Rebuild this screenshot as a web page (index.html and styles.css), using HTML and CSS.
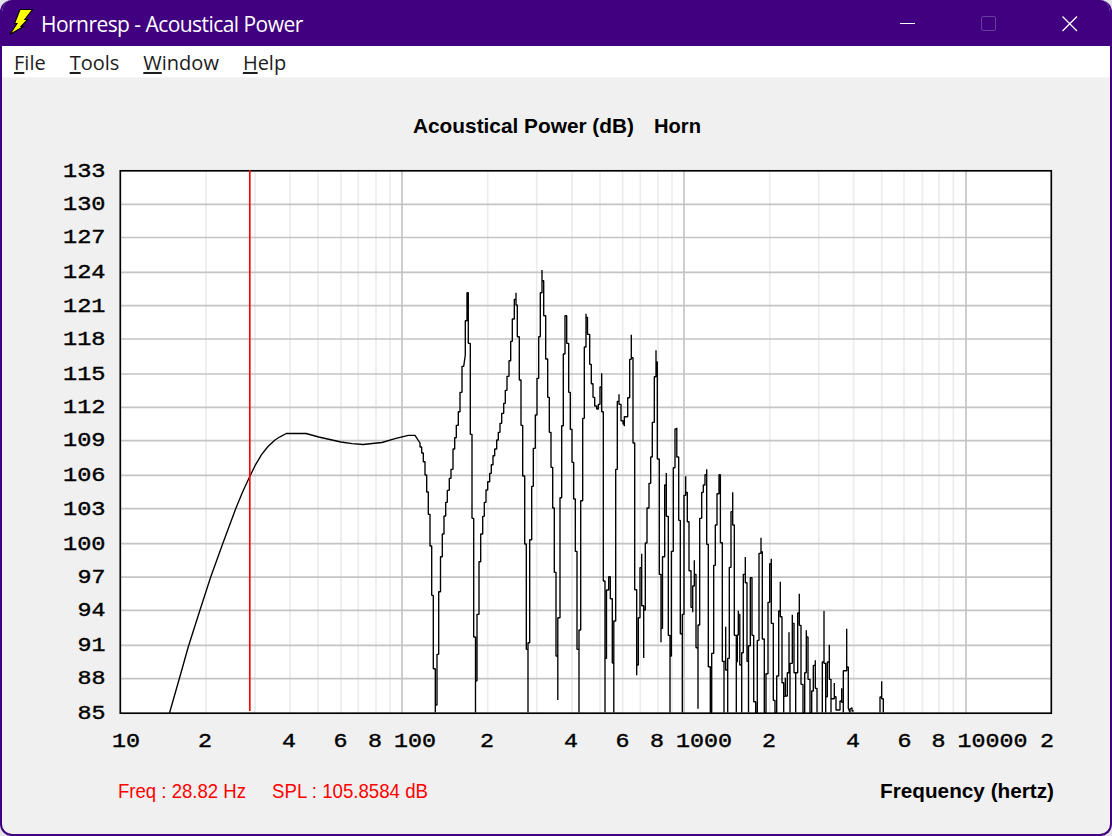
FILE: index.html
```html
<!DOCTYPE html>
<html lang="en">
<head>
  <meta charset="UTF-8" />
  <meta name="viewport" content="width=device-width, initial-scale=1.0"/>
  <title>Hornresp - Acoustical Power</title>
  <link rel="stylesheet" href="styles.css">
</head>
<body>
  <div class="window">
    <header class="titlebar">
      <svg class="app-icon" width="26" height="30" viewBox="0 0 26 30">
        <path d="M12 2.5H24.5L16.8 12.5H19.8L13 19.5H15.5L1.8 27.5L9 16.5H6.5Z" fill="#ffff00" stroke="#000" stroke-width="1.1"/>
      </svg>
      <h1>Hornresp - Acoustical Power</h1>
      <div class="controls">
        <svg width="16" height="16" viewBox="0 0 16 16"><path d="M0 7.5H15" stroke="#fff"/></svg>
        <svg width="16" height="16" viewBox="0 0 16 16"><rect x="0.5" y="0.5" width="14" height="14" rx="1.5" fill="none" stroke="#6c3b9d"/></svg>
        <svg width="16" height="16" viewBox="0 0 16 16"><path d="M0.5 0.5L15 15M15 0.5L0.5 15" stroke="#fff" stroke-width="1.3"/></svg>
      </div>
    </header>

    <nav class="menu">
      <span><u>F</u>ile</span>
      <span><u>T</u>ools</span>
      <span><u>W</u>indow</span>
      <span><u>H</u>elp</span>
    </nav>

    <main>
      <svg class="chart" width="1108" height="756" viewBox="2 78 1108 756">
        <g class="heading">
          <text x="413" y="133" textLength="221" lengthAdjust="spacingAndGlyphs">Acoustical Power (dB)</text>
          <text x="654" y="133" textLength="47" lengthAdjust="spacingAndGlyphs">Horn</text>
        </g>

        <rect x="120.5" y="171" width="931" height="542" fill="#fff"/>

        <!-- minor frequency lines -->
        <path class="minor" d="M206 171V713M255 171V713M290 171V713M318 171V713M341 171V713M358.3 171V713M376 171V713M390 171V713
          M487.7 171V713M536.7 171V713M572 171V713M600 171V713M622.7 171V713M640.3 171V713M658 171V713M672 171V713
          M769.7 171V713M818.7 171V713M853.7 171V713M881.7 171V713M904 171V713M922.3 171V713M939 171V713M953.3 171V713"/>
        <!-- decades and dB lines -->
        <path class="major" d="M402 171V713M684 171V713M966 171V713
          M120.5 204.3H1051M120.5 237.5H1051M120.5 272.3H1051M120.5 305.7H1051M120.5 339H1051M120.5 374H1051M120.5 407.3H1051M120.5 440.7H1051
          M120.5 475.3H1051M120.5 508.7H1051M120.5 543.7H1051M120.5 577.2H1051M120.5 610.4H1051M120.5 645.3H1051M120.5 678.7H1051"/>

        <!-- response -->
        <path class="curve" d="M169.5 713L179.3 678.7L188.3 646.7L200 610L210.7 577L222.7 543.7L235.7 508.7L243 491L250 476L255 465.7L261.7 454.3L268 446.5L275 440L280 436.8L286.3 433.5H306L318.7 437L341 442L352 443.7L363 444.5L382 442.5L395 438.7L408.3 435.3H415L420 443
          V447H421.7V453H423.3V461.7H425V475H426.7V492H428.3V514.3H430V546H431.7V595.3H433.3V668.7H435.3V712.5V705H437V654.3H438.7V591.7H440.5V556.7H442.3V534H444V516H445.7V502.3H447.3V490.3H449.3V478.3H451V469.3H453V449H454.7V437.7H456.3V425.3H458.3V411.7H460V392.3H462V366.3H463.7L465.3 355V320.7H467V292.7H468.3V343.3H470.3V434.3H472V518.3H473.7V637H475.5V712.5
          V680.7H477V614.3H479V561.7H480.7V534H482.7V516.3H484.3V502.3H486V490H487.7V481.7H489.7V473.3H491.3V464.7H493V455.7H494.7V449H496.7V440H498.3V432.3H500V423.3H501.7V413.3H503.7V403.3H505.3V390.3H507V376.3H509V360.7H510.7V341.3H512.3V319H514.3V299.3H516V292.7V305H517.3V336.7H519.3V380H521V425.3H522.7V476H524.7V544H526.3V649.3H528V712.5
          V642.7H529.7V539.7H531.7V486.3H533.3V448.3H535.3V415H537V378.3H538.7V336.7H540.3V292.7H542V270V280.7H543.7V315.7H545.7V359H547.7V397.3H549.3V432.3H551V467.3H552.7V508H554.3V572.3H556V656H557.8V700
          V617.7H560V497.7H561.7V425.7H563.3V354H565V315.7H566.7V343.3H568.7V392.3H570.3V429.3H572V462.3H573.7V499H575.3V551.3H577V649.3H579V712.5
          V630H580.7V500.7H582.7V418.3H584.3V347H586V313.7V317.3H587.5V334.3H589.7V364.3H591.3V383.7H593V397.3H594.7V406H596.7V409H598.3V404.3H600V387H601.7V373.3V411.7H603.3V581H605V712.5
          V658.3H606.5V590H608.7V576.7H610.3V598.7H612.3V663H613.8V712.5V621H615.7V469.3H617.3V401.3H619V394.3V404.3H621V420.7H623V424H624.3V426.3V416.7H627.7V397.7H629.7V359.3H631.3V334.7V357.7H633V443H634.7V589.7H636.7V675.3
          V665H638.3V617.7H640V567.7H641.7V553.7V605.7H643.7V658V610H645.3V543H647V508H649V483.3H650.7V457H652.3V422.3H654.3V376.7H656V350.3V362H657.3V459H659.3V574.3H661V642.3V628.3H662.5V556.7H664.7V485H666.3V473V516.3H668.3V635.3H670V712.5
          V656H671.4V551.3H673.3V467.7H675V429H676.8V427.7V457H678.7V520.3H680.3V633.7H682.3V712.5V614.3H684V495.3H685.7V476.3V492.3H687.3V521.7H689V570.7H691V607.3H692.7V612.3V586H694.3V560.3V574.3H696V647.7H698V708.7
          V625H699.7V518.3H701.7V492.3H703.3V485H705V474.7H706.7V469.3V544.3H708.3V666.7H710.3V712.5H711.7V653.3H713.7V565.3H715.3V525H717V493.7H719V474.7H720.4V542.7H722.3V661.3H724V712.5
          V661.3H725.7V626.7V670H727.7V712.5V658.3H729.3V567.3H731V511.7H732.7V492.3V525H734.3V635.3H736.3V712.5V661.7H737.3V635H738.3V610.7V614.3H739.8V665H741.7V712.5V652.7H743.3V574.3H745.3V557V582.7H747V661.3H748.5V712.5
          V645.7H750.3V577.7H752V635.3H753.7V701.7H755.7V712.5H757.3V640.3H759V553.3H761V537.7V551.7H762.3V639H764.3V712.5H766V673.7H768V602.3H769.7V563.7H771.3V558.7V623.3H773.3V700.3H775V712.5H776.7V676H778.7V611H780.3V581.7
          V616.7H782V682.7H783.7V712.5V696.3H785.3V677.7V696H787.3V672.7H789V632.3V673H790V712.5V663.3H792.3V614.7V623.3H794V672.7H795.7V712.5V672.7H797.7V613H799.3V593.7V625.3H801V684.3H803V712.5H804.7V672.7H806.3V630.3V637H808V679.3H810V712.5
          H811.7V691H813.3V665.3H815.3V660.3V688.3H817V712.5M822.3 712.5V662H824V611V663.3H825.7V712.5V696.7H827.3V662H829.3V644.7V679.3H831V712.5V698.7H834.3V683V696.7H836V701V710H840V701H841.7V688.3V702.3H843.3V712.5V670.7H846.7V628.7V667H848.3V708.3L850 712.5V709L852 707.7V711H853.7
          M880 712.5V697H881.7V681.3V698.7H883.3V712.5"/>

        <rect class="frame" x="120.3" y="170.8" width="931" height="542.4"/>
        <path class="cursor" d="M249.8 170V711"/>

        <g class="scale">
          <text x="63" y="176.5" textLength="42.5" lengthAdjust="spacingAndGlyphs">133</text>
          <text x="63" y="210" textLength="42.5" lengthAdjust="spacingAndGlyphs">130</text>
          <text x="63" y="243" textLength="42.5" lengthAdjust="spacingAndGlyphs">127</text>
          <text x="63" y="278" textLength="42.5" lengthAdjust="spacingAndGlyphs">124</text>
          <text x="63" y="311.5" textLength="42.5" lengthAdjust="spacingAndGlyphs">121</text>
          <text x="63" y="344.5" textLength="42.5" lengthAdjust="spacingAndGlyphs">118</text>
          <text x="63" y="379.5" textLength="42.5" lengthAdjust="spacingAndGlyphs">115</text>
          <text x="63" y="413" textLength="42.5" lengthAdjust="spacingAndGlyphs">112</text>
          <text x="63" y="446" textLength="42.5" lengthAdjust="spacingAndGlyphs">109</text>
          <text x="63" y="481" textLength="42.5" lengthAdjust="spacingAndGlyphs">106</text>
          <text x="63" y="514.5" textLength="42.5" lengthAdjust="spacingAndGlyphs">103</text>
          <text x="63" y="549.5" textLength="42.5" lengthAdjust="spacingAndGlyphs">100</text>
          <text x="77.5" y="582.5" textLength="28" lengthAdjust="spacingAndGlyphs">97</text>
          <text x="77.5" y="616" textLength="28" lengthAdjust="spacingAndGlyphs">94</text>
          <text x="77.5" y="651" textLength="28" lengthAdjust="spacingAndGlyphs">91</text>
          <text x="77.5" y="684" textLength="28" lengthAdjust="spacingAndGlyphs">88</text>
          <text x="77.5" y="719" textLength="28" lengthAdjust="spacingAndGlyphs">85</text>

          <text x="112" y="747" textLength="28" lengthAdjust="spacingAndGlyphs">10</text>
          <text x="198" y="747" textLength="14" lengthAdjust="spacingAndGlyphs">2</text>
          <text x="282" y="747" textLength="14" lengthAdjust="spacingAndGlyphs">4</text>
          <text x="333.5" y="747" textLength="14" lengthAdjust="spacingAndGlyphs">6</text>
          <text x="368" y="747" textLength="14" lengthAdjust="spacingAndGlyphs">8</text>
          <text x="394" y="747" textLength="42" lengthAdjust="spacingAndGlyphs">100</text>
          <text x="480" y="747" textLength="14" lengthAdjust="spacingAndGlyphs">2</text>
          <text x="564" y="747" textLength="14" lengthAdjust="spacingAndGlyphs">4</text>
          <text x="615.5" y="747" textLength="14" lengthAdjust="spacingAndGlyphs">6</text>
          <text x="650" y="747" textLength="14" lengthAdjust="spacingAndGlyphs">8</text>
          <text x="676" y="747" textLength="56" lengthAdjust="spacingAndGlyphs">1000</text>
          <text x="762" y="747" textLength="14" lengthAdjust="spacingAndGlyphs">2</text>
          <text x="846" y="747" textLength="14" lengthAdjust="spacingAndGlyphs">4</text>
          <text x="897.5" y="747" textLength="14" lengthAdjust="spacingAndGlyphs">6</text>
          <text x="931.5" y="747" textLength="14" lengthAdjust="spacingAndGlyphs">8</text>
          <text x="957.5" y="747" textLength="70" lengthAdjust="spacingAndGlyphs">10000</text>
          <text x="1040" y="747" textLength="14" lengthAdjust="spacingAndGlyphs">2</text>
        </g>

        <g class="readout">
          <text x="118" y="798" textLength="128" lengthAdjust="spacingAndGlyphs">Freq : 28.82 Hz</text>
          <text x="272" y="798" textLength="156" lengthAdjust="spacingAndGlyphs">SPL : 105.8584 dB</text>
        </g>
        <text class="axis-title" x="880" y="798" textLength="174" lengthAdjust="spacingAndGlyphs">Frequency (hertz)</text>
      </svg>
    </main>
  </div>
</body>
</html>
```
FILE: styles.css
```css
* {
  box-sizing: border-box;
}
body {
  margin: 0;
  background: #e4e4e8;
}
.window {
  width: 1112px;
  height: 836px;
  border: 2px solid #40007f;
  border-top: none;
  border-radius: 12px;
  background: #f0f0f0;
  overflow: hidden;
}
.titlebar {
  height: 46px;
  padding-left: 6px;
  background: #40007f;
  color: white;
  display: flex;
  align-items: center;
}
.app-icon {
  margin-bottom: 3px;
}
.titlebar h1 {
  margin: 2px 0 0 7px;
  font: 400 21px "Open Sans", "Noto Sans", sans-serif;
  letter-spacing: -0.55px;
  white-space: nowrap;
}
.controls {
  margin-left: auto;
  padding: 1px 32px 0 0;
  display: flex;
  gap: 65px;
}
.menu {
  height: 32px;
  padding: 2px 12px 0;
  background: white;
  border-bottom: 1px solid #f5f5f5;
  display: flex;
  align-items: center;
  gap: 24px;
  font: 400 20px "Open Sans", "Noto Sans", sans-serif;
  color: #1c1c1c;
}
.menu u {
  text-underline-offset: 2px;
  text-decoration-thickness: 2px;
}
.chart {
  display: block;
}
.minor,
.major,
.curve,
.frame,
.cursor {
  fill: none;
  stroke-width: 1.67;
}
.minor {
  stroke: #ececec;
}
.major {
  stroke: #c4c4c4;
}
.curve {
  stroke: #000;
  stroke-width: 1.35;
  stroke-linejoin: bevel;
}
.frame {
  stroke: #000;
}
.cursor {
  stroke: #ff0000;
}
.heading,
.axis-title {
  font: 700 21px "Liberation Sans", Arial, sans-serif;
}
.readout {
  font: 400 21px "Liberation Sans", Arial, sans-serif;
  fill: #ff0000;
}
.scale {
  font: 400 20px "Liberation Mono", monospace;
  stroke: #000;
  stroke-width: 0.4;
}
```
